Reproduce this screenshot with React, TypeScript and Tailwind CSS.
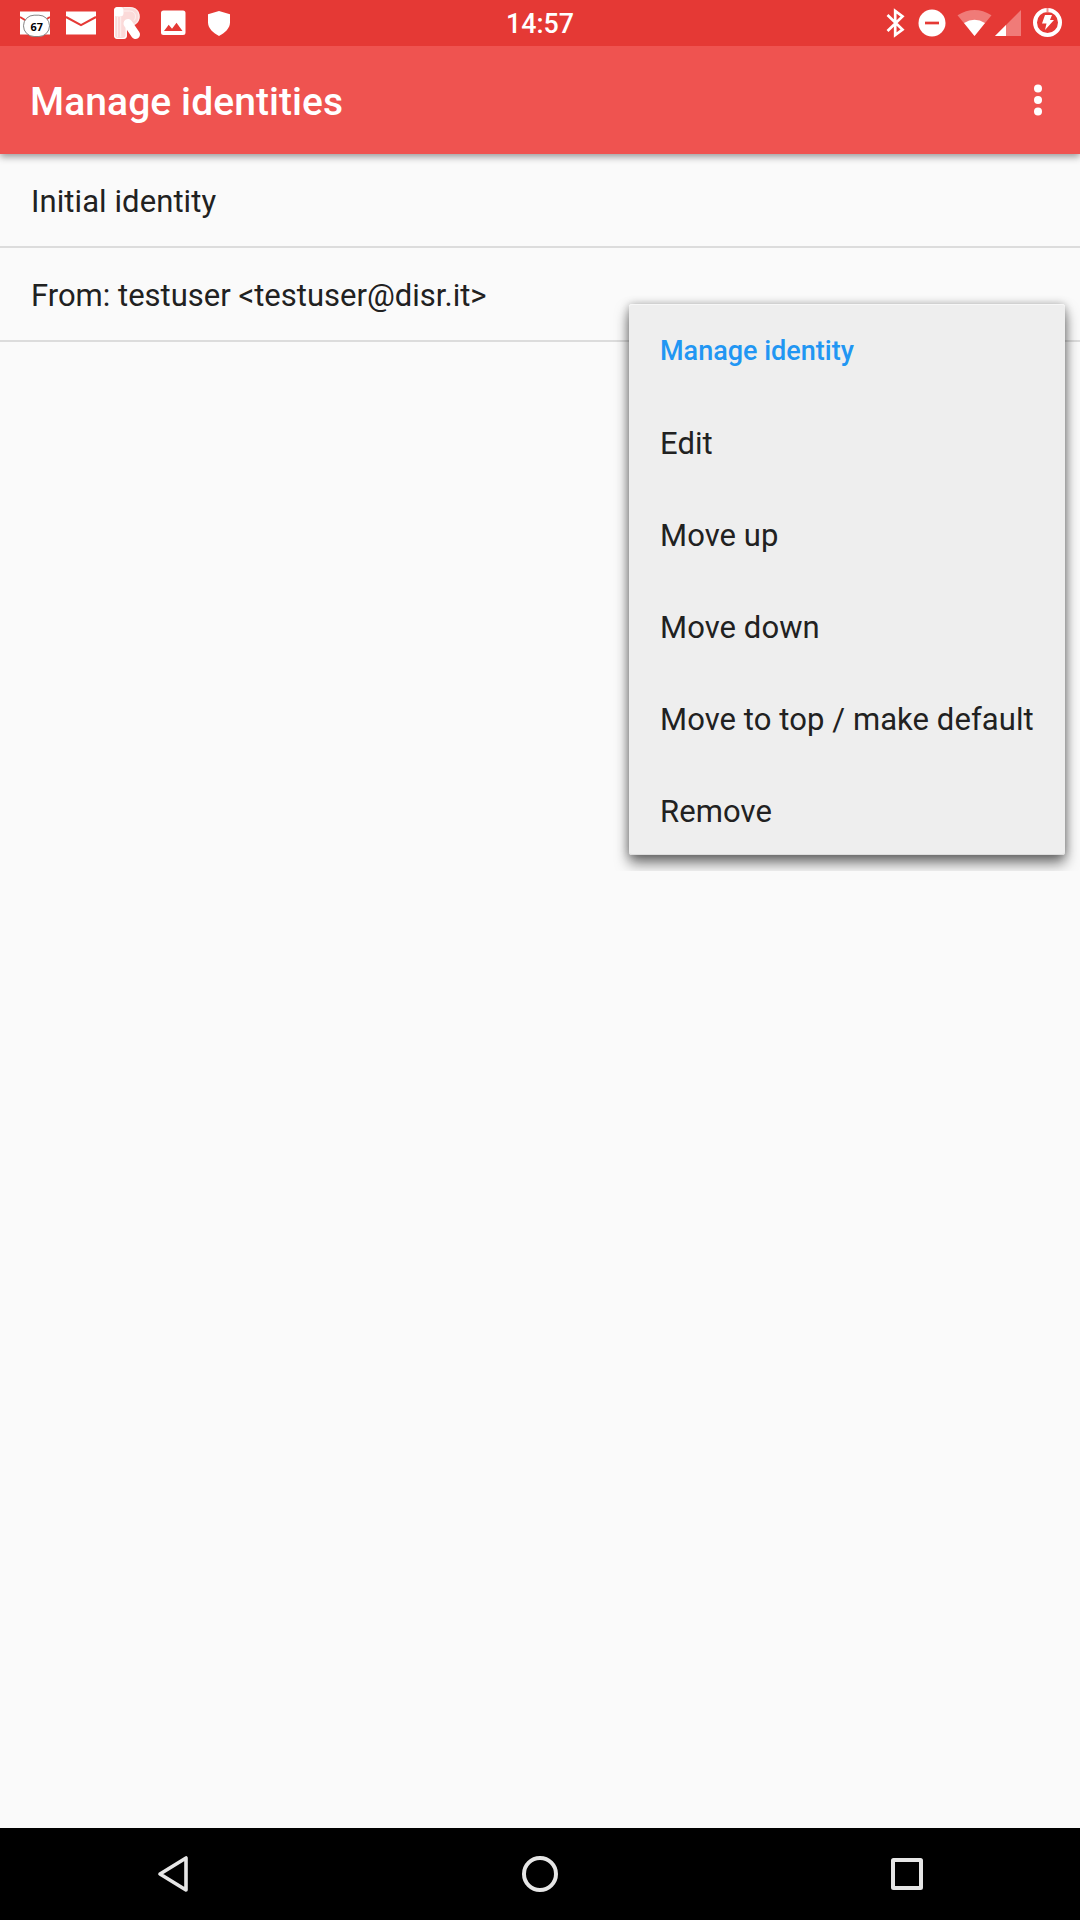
import React from "react";

const menuItems = ["Edit", "Move up", "Move down", "Move to top / make default", "Remove"];

function StatusBar() {
  return (
    <header className="relative z-10 grid h-[46px] grid-cols-3 items-center bg-[#e53935] text-white">
      <div className="flex h-[46px] items-center">
        <svg width="240" height="46" viewBox="0 0 240 46" fill="none">
          <path d="M20 11.5h30v23H20z" fill="#fff" />
          <path d="M20 17l15 9 15-9" stroke="#e53935" strokeWidth="2" />
          <rect x="23.5" y="15.2" width="26" height="21.3" rx="10.6" fill="#fff" stroke="#858585" />
          <text x="36.7" y="31" textAnchor="middle" fill="#000" fontFamily="Open Sans" fontWeight="700" fontSize="10.8">67</text>
          <path d="M66 11.5h30v23H66z" fill="#fff" />
          <path d="M66 17l15 8.2 15-8.2" stroke="#e53935" strokeWidth="2" />
          <path d="M118 7h12c6 0 9.800 4 9.800 9.500 0 4-2.300 7-5 8.500l-7.800 1v9c0 3-1.500 4-4 4h-5c-2.500 0-4-1.500-4-4V11c0-2.500 1.500-4 4-4z" fill="#fbdad9" />
          <path d="M124 7.700h6c5.500 0 9 3.700 9 8.800 0 3.500-1.500 6-4 7.500M124 11h5.500c3.500 0 6 2.200 6 5.500 0 2-.8 3.500-2 4.500M117.500 17v20M120.700 17v20" stroke="#fff" strokeOpacity="0.6" strokeWidth="1" />
          <rect x="114" y="7" width="9.500" height="9.500" rx="3.500" fill="#fff" />
          <path d="M128 23.500l7.500 11" stroke="#fff" strokeWidth="9" strokeLinecap="round" />
          <path d="M114.600 13v22.500c0 2 1.500 3 3.500 3h4.300c2 0 3.800-1 3.800-3V28" stroke="#fff" strokeWidth="1.200" />
          <path fillRule="evenodd" d="M163.500 10.500h19.500q2.500 0 2.500 2.500v19.500q0 2.500-2.500 2.500h-19.500q-2.500 0-2.500-2.500V13q0-2.500 2.500-2.500zM164 31h18.500l-6-8.300-4.500 6-3.300-3.900z" fill="#fff" />
          <path d="M219 11l11 3.300v8c0 6.200-5.500 11-11 13.700-5.500-2.700-11-7.500-11-13.700v-8z" fill="#fff" />
        </svg>
      </div>
      <time className="pt-[2px] text-center text-[26.800px] leading-none font-medium">14:57</time>
      <div className="flex h-[46px] justify-end">
        <svg width="220" height="46" viewBox="860 0 220 46" fill="none">
          <path d="M887.500 15l15 14.500-7.300 5.500V11l7.300 5.500-15 14.500" stroke="#fff" strokeWidth="2.700" />
          <circle cx="932" cy="23" r="13.500" fill="#fff" />
          <path d="M925 23h14" stroke="#e53935" strokeWidth="2.700" />
          <path d="M957.500 15.200q17-10.400 34 0L974.500 36z" fill="#f07b78" />
          <path d="M964 23q10.500-6.500 21 0L974.500 36z" fill="#fff" />
          <path d="M1021 10v26h-26z" fill="#f07b78" />
          <path d="M1006 25v11h-11z" fill="#fff" />
          <circle cx="1047.500" cy="22.500" r="12.500" stroke="#fff" strokeWidth="4" />
          <path d="M1047.500 8v4.500" stroke="#f29492" strokeWidth="2" />
          <path d="M1045 15h7l-2 5h4l-9 10 1.500-6.500h-4.500z" fill="#fff" />
        </svg>
      </div>
    </header>
  );
}

function AppBar() {
  return (
    <div className="relative flex h-[108px] items-center justify-between bg-[#ef5350] pr-[38px] pl-[30px] text-white shadow-[0_3px_7px_rgba(0,0,0,0.38)]">
      <h1 className="pt-[5px] text-[39px] leading-none font-medium tracking-[0.08px]">Manage identities</h1>
      <svg width="8" height="32" viewBox="0 0 8 32" fill="#fff">
        <circle cx="4" cy="4.500" r="4" />
        <circle cx="4" cy="16" r="4" />
        <circle cx="4" cy="27.500" r="4" />
      </svg>
    </div>
  );
}

function IdentityMenu() {
  return (
    <div className="absolute top-[304px] left-[629px] h-[551px] w-[436px]">
      <div className="absolute inset-x-[-16px] top-[-10px] bottom-[-16px] overflow-hidden">
        <div className="absolute inset-x-[16px] top-[10px] bottom-[16px] rounded-[3px] shadow-[0_0_8px_rgba(0,0,0,0.25),0_8px_14px_rgba(0,0,0,0.55)]" />
      </div>
      <div className="relative flex h-full flex-col rounded-[3px] bg-[#eee] pl-[31px] shadow-[inset_0_1px_0_#f7f7f7,inset_0_-1px_0_#ddd]">
        <div className="flex h-[93px] items-center pt-[4px] text-[27px] font-medium text-[#2196f3]">Manage identity</div>
        {menuItems.map((item) => (
          <button key={item} className="flex h-[92px] shrink-0 items-center pt-[6px] text-left text-[31px] tracking-[0.08px] whitespace-nowrap">
            {item}
          </button>
        ))}
      </div>
    </div>
  );
}

function NavigationBar() {
  return (
    <nav className="flex h-[92px] items-center justify-between bg-black pr-[155px] pl-[155px]">
      <svg width="36" height="40" viewBox="0 0 36 40" fill="none" stroke="#e6e6e6" strokeWidth="3.600" strokeLinejoin="round">
        <path d="M31 4v32L5 20z" />
      </svg>
      <svg width="40" height="40" viewBox="0 0 40 40" fill="none" stroke="#e6e6e6" strokeWidth="4">
        <circle cx="20" cy="20" r="16" />
      </svg>
      <svg width="36" height="40" viewBox="0 0 36 40" fill="none" stroke="#e6e6e6" strokeWidth="4">
        <rect x="4" y="6" width="28" height="28" rx="0.500" />
      </svg>
    </nav>
  );
}

export default function App() {
  return (
    <div className="relative flex h-[1920px] w-[1080px] flex-col overflow-hidden bg-[#fafafa] font-[Roboto,sans-serif] text-[#212121]">
      <StatusBar />
      <AppBar />
      <main className="flex-1 text-[31px]">
        <div className="flex h-[94px] items-center border-b-2 border-[#dcdcdc] pt-[4px] pl-[31px] tracking-[0.08px]">Initial identity</div>
        <div className="flex h-[94px] items-center border-b-2 border-[#dcdcdc] pt-[4px] pl-[31px]">
          From: testuser &lt;testuser@disr.it&gt;
        </div>
      </main>
      <NavigationBar />
      <IdentityMenu />
    </div>
  );
}
